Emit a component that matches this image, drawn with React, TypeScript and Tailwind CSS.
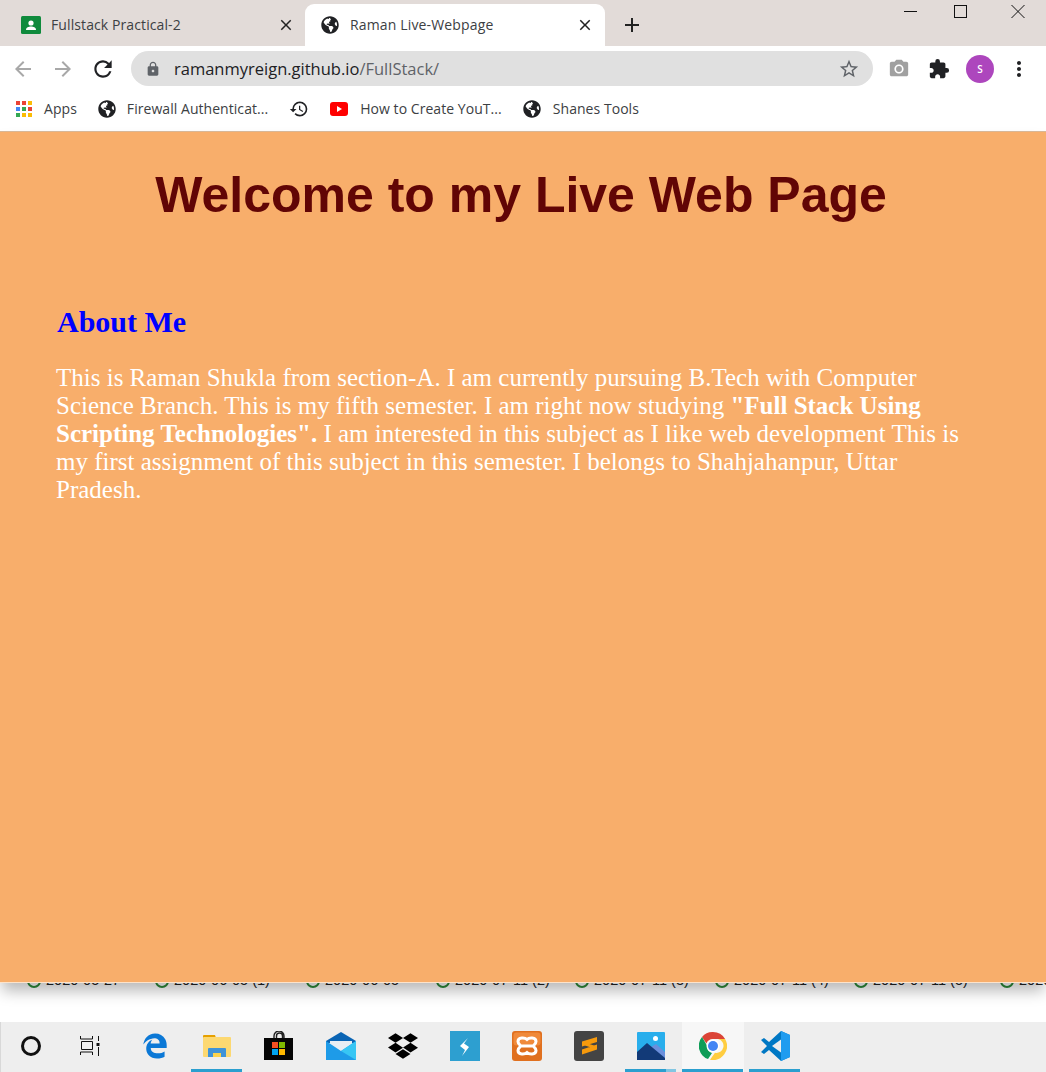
import React from 'react';
import { FaGlobeAmericas, FaDropbox, FaEdgeLegacy } from 'react-icons/fa';
import { MdArrowBack, MdArrowForward, MdRefresh, MdLock, MdStarBorder, MdPhotoCamera, MdExtension, MdMoreVert, MdHistory, MdClose, MdAdd } from 'react-icons/md';

const chromeFont = "font-['Open_Sans','Noto_Sans',sans-serif]";

const Classroom = () => (
  <svg width="20" height="18" viewBox="0 0 20 18">
    <rect width="20" height="18" rx="1.5" fill="#0f8a3c" />
    <circle cx="10" cy="7" r="2.6" fill="#fff" />
    <path d="M5 14c0-2.4 2.6-3.4 5-3.4s5 1 5 3.4z" fill="#fff" />
  </svg>
);

const AppsGrid = () => {
  const colors = ['#ea4335', '#ea4335', '#fbbc05', '#4285f4', '#34a853', '#ea4335', '#34a853', '#fbbc05', '#fbbc05'];
  return (
    <div className="grid grid-cols-3 gap-[2px] w-4 h-4">
      {colors.map((c, i) => (
        <span key={i} className="w-1 h-1" style={{ background: c }} />
      ))}
    </div>
  );
};

const YouTube = () => (
  <svg width="18" height="14" viewBox="0 0 18 14">
    <rect width="18" height="14" rx="3" fill="#f00" />
    <path d="M7 4l5 3-5 3z" fill="#fff" />
  </svg>
);

const Bookmark = ({ icon, label, className }: { icon: React.ReactNode; label?: string; className?: string }) => (
  <div className={`flex items-center gap-[10px] ${className ?? ''}`}>
    {icon}
    {label && <span className="text-[14px] tracking-[0.05px] text-[#3c4043] whitespace-nowrap">{label}</span>}
  </div>
);

const Explorer = () => (
  <svg width="28" height="24" viewBox="0 0 28 24">
    <path d="M0 2a1 1 0 0 1 1-1h11l1 3h-13z" fill="#e6a000" />
    <rect y="3" width="28" height="20" rx="1" fill="#fcd871" />
    <path d="M5 23v-8a1 1 0 0 1 1-1h16a1 1 0 0 1 1 1v8h-5v-4h-8v4z" fill="#3f93d8" />
    <rect x="10" y="19" width="8" height="4" fill="#fcd34d" />
  </svg>
);

const Store = () => (
  <svg width="30" height="29" viewBox="0 0 30 29">
    <path d="M10 8V5a5 5 0 0 1 10 0v3M12.5 8V5a3 3 0 0 1 6 0v3" fill="none" stroke="#222" strokeWidth="1.4" />
    <rect y="7" width="29" height="22" fill="#050505" />
    <rect x="8" y="11" width="6" height="6" fill="#f25022" />
    <rect x="15" y="11" width="6" height="6" fill="#7fba00" />
    <rect x="8" y="18" width="6" height="6" fill="#00a4ef" />
    <rect x="15" y="18" width="6" height="6" fill="#ffb900" />
  </svg>
);

const Mail = () => (
  <svg width="30" height="28" viewBox="0 0 30 28">
    <path d="M0 9L15 0l15 9v2H0z" fill="#0a64b4" />
    <path d="M4 9h22v8l-11 5-11-5z" fill="#e8eef4" />
    <path d="M0 9l15 10L30 9v19H0z" fill="#1e9be8" />
    <path d="M30 9v19L15 19z" fill="#37c6f4" />
  </svg>
);

const Shortcut = () => (
  <svg width="30" height="30" viewBox="0 0 30 30">
    <rect width="30" height="30" fill="#2d9fd0" />
    <path d="M18 7l-8 8 5 4-3 6 7-9-5-3.500z" fill="#fff" />
  </svg>
);

const Xampp = () => (
  <svg width="30" height="30" viewBox="0 0 30 30">
    <rect width="30" height="30" rx="3" fill="#e0701f" />
    <rect x="1.500" y="1.500" width="27" height="13" rx="3" fill="#f08a3a" />
    <path d="M15 8.500C13 6.500 6 6 6 10.500 6 13 8 14 9 15 8 16 6 17 6 19.500 6 24 13 23.500 15 21.500 17 23.500 24 24 24 19.500 24 17 22 16 21 15 22 14 24 13 24 10.500 24 6 17 6.500 15 8.500ZM9 15H21" fill="none" stroke="#fff" strokeWidth="3" />
  </svg>
);

const Sublime = () => (
  <svg width="30" height="30" viewBox="0 0 30 30">
    <rect width="30" height="30" rx="3" fill="#444" />
    <path d="M23 6v5L8 15.500v-5zM23 13.500v5L8 23.500v-5zM8 10.500l15 5v3l-15-5z" fill="#f79a0c" />
  </svg>
);

const Photos = () => (
  <svg width="28" height="28" viewBox="0 0 28 28">
    <rect width="28" height="28" rx="1" fill="#28aeec" />
    <circle cx="18.500" cy="6.500" r="2.500" fill="#fff" />
    <path d="M14 15l5-3 9 8v8H14z" fill="#6a8fdc" />
    <path d="M0 20l10-9 18 15v2H0z" fill="#123a78" />
  </svg>
);

const Chrome = () => (
  <svg width="28" height="28" viewBox="0 0 28 28">
    <path d="M14 0a14 14 0 0 1 12.100 7H14a7 7 0 0 0-6.600 4.600L3 5a14 14 0 0 1 11-5z" fill="#db4437" />
    <path d="M3 5l5 8.600a7 7 0 0 0 5 7.300L9 27.100A14 14 0 0 1 3 5z" fill="#0f9d58" />
    <path d="M26.100 7A14 14 0 0 1 11 27.700l5-7a7 7 0 0 0 3-13.700z" fill="#ffcd40" />
    <circle cx="14" cy="14" r="6.500" fill="#fff" />
    <circle cx="14" cy="14" r="5" fill="#4285f4" />
  </svg>
);

const VSCode = () => (
  <svg width="30" height="30" viewBox="0 0 30 30">
    <path d="M21 0l9 4v22l-9 4-12-11-5 4-3-2 6-6-6-6 3-2 5 4z" fill="#0078c4" />
    <path d="M21 0l9 4v22l-9 4z" fill="#1f9cf0" />
    <path d="M21 8.500v13L12 15z" fill="#eee" />
  </svg>
);

const TaskCell = ({ children, bar, hover, split }: { children: React.ReactNode; bar?: boolean; hover?: boolean; split?: boolean }) => (
  <div className={`relative w-[62px] h-full flex items-center justify-center pb-[3px] ${hover ? 'bg-[#f7f7f7]' : ''}`}>
    {children}
    {bar && !hover && (
      <div className="absolute bottom-0 left-[5px] w-[51px] h-[3px] bg-[#2b9fcf] flex justify-end">
        {split && <div className="w-[10px] h-full bg-[#82c6e2]" />}
      </div>
    )}
    {hover && <div className="absolute bottom-0 left-0 w-[61px] h-[3px] bg-[#2b9fcf]" />}
  </div>
);

const files = [
  ['2020-05-27', 'w-[128px]'],
  ['2020-06-05 (1)', 'w-[151px]'],
  ['2020-06-05', 'w-[130px]'],
  ['2020-07-11 (2)', 'w-[139px]'],
  ['2020-07-11 (3)', 'w-[140px]'],
  ['2020-07-11 (4)', 'w-[139px]'],
  ['2020-07-11 (5)', 'w-[146px]'],
  ['2020-07-11 (6)', 'w-[120px]'],
];

export default function App() {
  return (
    <div className={`w-[1046px] h-[1072px] overflow-hidden flex flex-col bg-white ${chromeFont}`}>
      {/* tab strip */}
      <div className="h-[46px] bg-[#e2dbd8] flex items-end shrink-0">
        <div className="w-[305px] h-[42px] flex items-center pl-[21px] pr-[10px]">
          <Classroom />
          <span className="ml-[10px] mb-[2px] text-[14px] tracking-[0.1px] text-[#3c4043] whitespace-nowrap">Fullstack Practical-2</span>
          <MdClose className="ml-auto text-[#222] w-[18px] h-[18px]" />
        </div>
        <div className="w-[300px] h-[42px] bg-white rounded-t-[9px] flex items-center pl-[16px] pr-[11px]">
          <FaGlobeAmericas className="text-[#202124] w-[18px] h-[18px]" />
          <span className="ml-[11px] mb-[2px] text-[14px] tracking-[0.15px] text-[#3c4043] whitespace-nowrap">Raman Live-Webpage</span>
          <MdClose className="ml-auto text-[#222] w-[18px] h-[18px]" />
        </div>
        <div className="w-[54px] h-[42px] flex items-center justify-center">
          <MdAdd className="text-[#222] w-[24px] h-[24px]" />
        </div>
        <div className="ml-auto self-start flex items-start">
          <svg width="20" height="24" viewBox="0 0 20 24" className="mr-[31px]">
            <path d="M2 11.500h13" stroke="#111" strokeWidth="1" />
          </svg>
          <svg width="20" height="24" viewBox="0 0 20 24" className="mr-[38px]">
            <rect x="1.500" y="5.500" width="12" height="12" fill="none" stroke="#111" strokeWidth="1" />
          </svg>
          <svg width="20" height="24" viewBox="0 0 20 24" className="mr-[15px]">
            <path d="M0.500 5l13 13M13.500 5l-13 13" stroke="#111" strokeWidth="1" />
          </svg>
        </div>
      </div>

      {/* toolbar */}
      <div className="h-[46px] flex items-center shrink-0 pl-[11px]">
        <MdArrowBack className="text-[#a8a8a8] w-[24px] h-[24px] ml-0" />
        <MdArrowForward className="text-[#a8a8a8] w-[24px] h-[24px] ml-[16px]" />
        <MdRefresh className="text-[#202124] w-[26px] h-[26px] ml-[15px]" />
        <div className="ml-[15px] w-[742px] h-[35px] rounded-full bg-[#e0e0e0] flex items-center pl-[14px] pr-[13px] mb-[1px]">
          <MdLock className="text-[#5f6368] w-[16px] h-[16px]" />
          <span className="ml-[13px] mt-[1px] text-[16.500px] text-[#202124] whitespace-nowrap">
            ramanmyreign.github.io<span className="text-[#5f6368]">/FullStack/</span>
          </span>
          <MdStarBorder className="ml-auto text-[#5f6368] w-[22px] h-[22px]" />
        </div>
        <MdPhotoCamera className="ml-[15px] text-[#a0a0a0] w-[22px] h-[22px]" />
        <MdExtension className="ml-[18px] text-[#202124] w-[22px] h-[22px]" />
        <div className="ml-[16px] w-[28px] h-[28px] rounded-full bg-[#ad46bd] text-white text-[10px] font-semibold flex items-center justify-center">
          S
        </div>
        <MdMoreVert className="ml-[13px] text-[#202124] w-[24px] h-[24px]" />
      </div>

      {/* bookmarks */}
      <div className="h-[39px] flex items-center shrink-0 pl-[16px] pb-[6px]">
        <Bookmark icon={<AppsGrid />} label="Apps" className="gap-[12px]" />
        <Bookmark icon={<FaGlobeAmericas className="text-[#202124] w-[18px] h-[18px]" />} label="Firewall Authenticat..." className="ml-[21px] gap-[11px]" />
        <Bookmark icon={<MdHistory className="text-[#202124] w-[20px] h-[20px]" />} className="ml-[21px]" />
        <Bookmark icon={<YouTube />} label="How to Create YouT..." className="ml-[21px] gap-[12px]" />
        <Bookmark icon={<FaGlobeAmericas className="text-[#202124] w-[18px] h-[18px]" />} label="Shanes Tools" className="ml-[21px] gap-[12px]" />
      </div>

      {/* page */}
      <div className="relative z-10 h-[852px] shrink-0 bg-[#f8ae6b] border-t border-[#d8b797] border-b border-b-[#fde3ca] shadow-[0_10px_14px_-2px_rgba(0,0,0,0.28)] px-[56px]">
        <h1 className="font-['Liberation_Sans',Arial,sans-serif] font-bold text-[50px] leading-[55px] text-[#610505] text-center mt-[36px] -ml-[4px]">
          Welcome to my Live Web Page
        </h1>
        <h2 className="font-['Liberation_Serif','Times_New_Roman',serif] font-bold text-[30px] leading-[37px] text-[#0000ff] mt-[80px] ml-[1px]">
          About Me
        </h2>
        <p className="font-['Liberation_Serif','Times_New_Roman',serif] text-[25px] leading-[28px] text-white mt-[24px] w-[920px]">
          This is Raman Shukla from section-A. I am currently pursuing B.Tech with Computer Science Branch. This is my
          fifth semester. I am right now studying <b>"Full Stack Using Scripting Technologies".</b> I am interested in
          this subject as I like web development This is my first assignment of this subject in this semester. I belongs
          to Shahjahanpur, Uttar Pradesh.
        </p>
      </div>

      {/* window behind */}
      <div className="h-[39px] shrink-0 overflow-hidden flex pl-[27px] font-['Liberation_Sans',Arial,sans-serif] text-[#222] text-[14.500px] leading-[16px]">
        {files.map(([name, width]) => (
          <div key={name} className={`${width} shrink-0 flex items-start gap-[5px] -mt-[11px] whitespace-nowrap`}>
            <span className="w-[14px] h-[16px] rounded-full border-2 border-[#2e8b3a] shrink-0" />
            {name}
          </div>
        ))}
      </div>

      {/* taskbar */}
      <div className="h-[50px] shrink-0 bg-[#eeeeee] shadow-[inset_1px_0_0_#d8d8d8] flex">
        <TaskCell>
          <span className="w-[20px] h-[20px] rounded-full border-[3px] border-[#111]" />
        </TaskCell>
        <TaskCell>
          <svg width="20" height="20" viewBox="0 0 20 20" className="mr-[6px]">
            <path d="M0.500 0v3h12V0M1.500 5.500h11v8h-11zM0.500 19v-3h12v3M18.500 0v5M18.500 11v9" fill="none" stroke="#111" strokeWidth="1" />
            <rect x="16.500" y="7" width="3" height="3" fill="#111" />
          </svg>
        </TaskCell>
        <TaskCell><FaEdgeLegacy className="text-[#0b78d6] w-[26px] h-[26px]" /></TaskCell>
        <TaskCell bar><Explorer /></TaskCell>
        <TaskCell><Store /></TaskCell>
        <TaskCell><Mail /></TaskCell>
        <TaskCell><FaDropbox className="text-black w-[30px] h-[30px]" /></TaskCell>
        <TaskCell><Shortcut /></TaskCell>
        <TaskCell><Xampp /></TaskCell>
        <TaskCell><Sublime /></TaskCell>
        <TaskCell bar split><Photos /></TaskCell>
        <TaskCell hover><Chrome /></TaskCell>
        <TaskCell bar><VSCode /></TaskCell>
      </div>
    </div>
  );
}
